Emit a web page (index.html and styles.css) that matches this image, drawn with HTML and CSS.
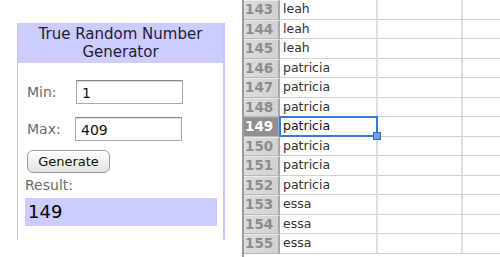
FILE: index.html
```html
<!DOCTYPE html>
<html lang="en">
<head>
  <meta charset="UTF-8">
  <title>True Random Number Generator</title>
  <link rel="stylesheet" href="styles.css">
</head>
<body>
  <div class="left">
    <div class="rng-box">
      <div class="rng-title">True Random Number<br>Generator</div>
      <div class="rng-body">
        <div class="field">
          <label>Min:</label>
          <input type="text" value="1">
        </div>
        <div class="field max">
          <label>Max:</label>
          <input type="text" value="409">
        </div>
        <button class="gen-btn">Generate</button>
        <div class="result-label">Result:</div>
        <div class="result">149</div>
      </div>
    </div>
  </div>

  <div class="sheet">
    <div class="row"><div class="num">143</div><div class="cell b">leah</div><div class="cell c"></div><div class="cell d"></div></div>
    <div class="row"><div class="num">144</div><div class="cell b">leah</div><div class="cell c"></div><div class="cell d"></div></div>
    <div class="row"><div class="num">145</div><div class="cell b">leah</div><div class="cell c"></div><div class="cell d"></div></div>
    <div class="row"><div class="num">146</div><div class="cell b">patricia</div><div class="cell c"></div><div class="cell d"></div></div>
    <div class="row"><div class="num">147</div><div class="cell b">patricia</div><div class="cell c"></div><div class="cell d"></div></div>
    <div class="row"><div class="num">148</div><div class="cell b">patricia</div><div class="cell c"></div><div class="cell d"></div></div>
    <div class="row active"><div class="num">149</div><div class="cell b selected">patricia</div><div class="cell c"></div><div class="cell d"></div></div>
    <div class="row"><div class="num">150</div><div class="cell b">patricia</div><div class="cell c"></div><div class="cell d"></div></div>
    <div class="row"><div class="num">151</div><div class="cell b">patricia</div><div class="cell c"></div><div class="cell d"></div></div>
    <div class="row"><div class="num">152</div><div class="cell b">patricia</div><div class="cell c"></div><div class="cell d"></div></div>
    <div class="row"><div class="num">153</div><div class="cell b">essa</div><div class="cell c"></div><div class="cell d"></div></div>
    <div class="row"><div class="num">154</div><div class="cell b">essa</div><div class="cell c"></div><div class="cell d"></div></div>
    <div class="row"><div class="num">155</div><div class="cell b">essa</div><div class="cell c"></div><div class="cell d"></div></div>
  </div>
</body>
</html>
```

FILE: styles.css
```css
* {
  box-sizing: border-box;
}

body {
  margin: 0;
  width: 500px;
  height: 257px;
  overflow: hidden;
  background: #ffffff;
  display: flex;
  font-family: 'DejaVu Sans', Verdana, sans-serif;
}

.left {
  width: 242px;
  padding: 23px 0 0 17px;
}

.rng-box {
  width: 208px;
  height: 217px;
  border-left: 1px solid #c4c4f4;
  border-right: 2px solid #c4c4ff;
  overflow: hidden;
}

.rng-title {
  background: #ccccff;
  height: 40px;
  padding-top: 2px;
  text-align: center;
  font-size: 15px;
  line-height: 18px;
  color: #1c1c38;
}

.rng-body {
  padding: 17px 5px 0 7px;
}

.field {
  display: flex;
  align-items: center;
  height: 24px;
}

.field.max {
  margin-top: 13px;
}

.field label {
  width: 51px;
  padding-left: 2px;
  font-size: 14px;
  color: #6a6a6a;
}

.field input {
  width: 107px;
  height: 24px;
  padding: 2px 5px 0;
  border: 1px solid #a9a9a9;
  border-top-color: #8a8a8a;
  box-shadow: inset 0 1px 1px rgba(0, 0, 0, 0.15);
  font-family: 'DejaVu Sans', Verdana, sans-serif;
  font-size: 14px;
  color: #111;
}

.field.max input {
  margin-left: -1px;
}

.gen-btn {
  display: block;
  margin: 9px 0 0 2px;
  width: 83px;
  height: 23px;
  padding: 0;
  border: 1px solid #9a9a9a;
  border-radius: 6px;
  background: linear-gradient(#ffffff, #f0f0f0 50%, #e2e2e2);
  font-family: 'DejaVu Sans', Verdana, sans-serif;
  font-size: 13px;
  color: #111;
}

.result-label {
  margin-top: 3px;
  font-size: 14px;
  line-height: 19px;
  color: #6a6a6a;
}

.result {
  margin-top: 3px;
  width: 192px;
  height: 28px;
  padding: 3px 0 0 3px;
  background: #ccccff;
  font-size: 18px;
  color: #000;
}

.sheet {
  flex: 1;
  height: 257px;
  overflow: hidden;
  border-left: 2px solid #9c9c9c;
  font-family: 'DejaVu Sans', Verdana, sans-serif;
}

.row {
  display: flex;
  height: 19.5px;
}

.num {
  width: 36px;
  background: linear-gradient(90deg, #dcdcdc, #d2d2d2);
  border-right: 2px solid #a8a8a8;
  border-bottom: 1px solid #b8b8b8;
  border-top: 1px solid #eaeaea;
  padding-left: 1px;
  font-size: 13.5px;
  font-weight: bold;
  line-height: 17px;
  color: #8d8d8d;
}

.row.active .num {
  background: #8f8f8f;
  color: #ffffff;
  border-top-color: #a0a0a0;
}

.cell {
  border-right: 2px solid #dedede;
  border-bottom: 1px solid #d2d2d2;
  font-size: 12.5px;
  line-height: 18px;
  color: #333;
  padding-left: 3px;
}

.cell.b {
  width: 98px;
}

.cell.c {
  width: 85px;
}

.cell.d {
  flex: 1;
  border-right: none;
}

.cell.selected {
  position: relative;
  color: #111;
}

.cell.selected::before {
  content: "";
  position: absolute;
  left: -1px;
  top: -1px;
  right: -2px;
  bottom: -1px;
  border: 2px solid #3b79d9;
}

.cell.selected::after {
  content: "";
  position: absolute;
  right: -5px;
  bottom: -4px;
  width: 6px;
  height: 6px;
  background: #6f9ee6;
  border: 1px solid #2f6ccf;
}
```
